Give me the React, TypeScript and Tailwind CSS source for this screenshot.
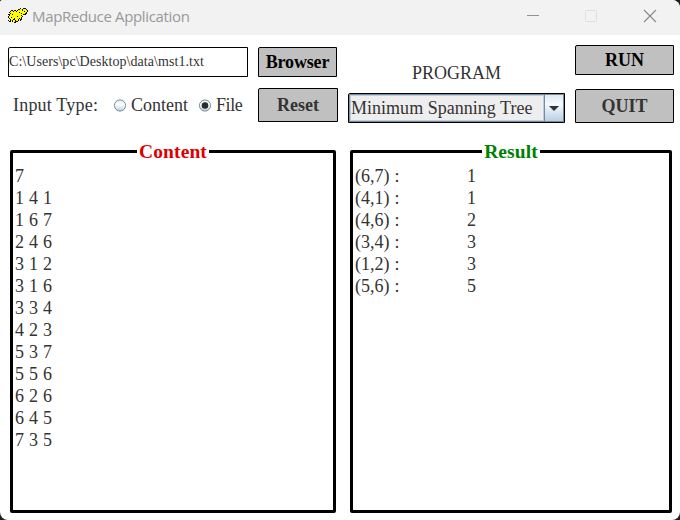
import React from "react";

const contentRows = ["7", "1 4 1", "1 6 7", "2 4 6", "3 1 2", "3 1 6", "3 3 4", "4 2 3", "5 3 7", "5 5 6", "6 2 6", "6 4 5", "7 3 5"];
const resultRows = [["(6,7) :", "1"], ["(4,1) :", "1"], ["(4,6) :", "2"], ["(3,4) :", "3"], ["(1,2) :", "3"], ["(5,6) :", "5"]];

const mascotPixels = [
  "............k..kkk..",
  "..........kkyykyyyk.",
  "...kk.kk.kyyyykyyyyk",
  "..kyykyykyyyyyyykyyk",
  ".kyyyyyyyyykyyyyyyk.",
  "..kyyyyyyyyyykyyykk.",
  "kkyykyyyyyyyyyykkk..",
  ".kyyyyyyyyyyyk......",
  "k.yyyyyyykyyyyk.....",
  "kyykyyyyyyyyyk......",
  ".kyyyykyyyykyk......",
  "..kyykkyyykykk......",
  "k.kykyykyyk.k.......",
  ".kk.kyykkk..........",
  "......kk............",
];

function Mascot() {
  return (
    <svg width="20" height="15" viewBox="0 0 20 15" shapeRendering="crispEdges">
      {mascotPixels.flatMap((row, y) =>
        row.split("").map((c, x) =>
          c === "." ? null : <rect key={`${x}-${y}`} x={x} y={y} width="1" height="1" fill={c === "k" ? "#111100" : "#ffff00"} />
        )
      )}
    </svg>
  );
}

function TitleBar() {
  return (
    <header className="flex h-[35px] items-start bg-[#f2f2f2] pl-2 text-[#999999]">
      <div className="mt-2"><Mascot /></div>
      <span className="ml-1 mt-[5px] font-['Open_Sans',sans-serif] text-[15px] leading-[22px] tracking-[-0.35px] whitespace-nowrap">MapReduce Application</span>
      <svg className="ml-auto mr-[23px] mt-[9px]" width="131" height="14" viewBox="0 0 131 14" fill="none">
        <path d="M1 6.5h12" stroke="#929292" />
        <rect x="59.5" y="1.5" width="11" height="11" rx="1" stroke="#e0e0e0" />
        <path d="M118 1l12 12M130 1l-12 12" stroke="#888888" strokeWidth="1.1" />
      </svg>
    </header>
  );
}

function PushButton({ label, className }: { label: string; className: string }) {
  return (
    <button className={`flex items-center justify-center rounded-tl-[2px] border border-black bg-[#c0c0c0] text-[18px] leading-[20px] font-bold ${className}`}>
      {label}
    </button>
  );
}

function Radio({ selected = false }: { selected?: boolean }) {
  return (
    <svg width="13" height="13" viewBox="0 0 13 13">
      <defs>
        <linearGradient id="radioFill" x1="0" y1="0" x2="0" y2="1">
          <stop offset="0" stopColor="#dde8f3" />
          <stop offset="0.4" stopColor="#ffffff" />
          <stop offset="1" stopColor="#b8cfe5" />
        </linearGradient>
      </defs>
      <circle cx="7" cy="6.5" r="5.6" fill="url(#radioFill)" stroke="#7a8a99" />
      {selected && <circle cx="7" cy="6.5" r="3.3" fill="#2b2b2b" />}
    </svg>
  );
}

function Controls() {
  return (
    <section className="flex h-[115px] items-start pl-2">
      <div className="w-[240px]">
        <div className="mt-3 flex h-[30px] items-center rounded-tl-[2px] border border-black">
          <span className="text-[14px] leading-4 tracking-[0.05px] whitespace-nowrap">C:\Users\pc\Desktop\data\mst1.txt</span>
        </div>
        <div className="mt-[17px] flex h-[22px] items-center pl-[5px] text-[18px] leading-[22px] whitespace-nowrap">
          <span className="w-[100px] tracking-[0.2px]">Input Type:</span>
          <Radio />
          <span className="ml-[5px] w-[67px]">Content</span>
          <Radio selected />
          <span className="ml-[5px] tracking-[-0.4px]">File</span>
        </div>
      </div>
      <div className="ml-[10px] mt-3 w-20">
        <PushButton label="Browser" className="h-[30px] w-[79px] tracking-[-0.15px] text-black" />
        <PushButton label="Reset" className="mt-[11px] h-[34px] w-20 text-[#333333]" />
      </div>
      <div className="ml-[10px] w-[217px]">
        <div className="mt-[27px] h-[22px] text-center text-[18px] leading-[22px]">PROGRAM</div>
        <div className="mt-[9px] flex h-[30px] rounded-tl-[2px] border border-black bg-[#eeeeee]">
          <div className="flex flex-1 items-center border border-[#7a8a99] shadow-[inset_0_0_0_1px_#b8cfe5] pl-[1px] text-[18px] leading-[22px] tracking-[0.02px] whitespace-nowrap">
            Minimum Spanning Tree
          </div>
          <div className="flex w-[19px] items-center justify-center border border-l-0 border-[#7a8a99] bg-linear-to-b from-[#dfe9f3] via-[#f7faff] via-35% to-[#b8cfe5]">
            <svg className="shrink-0" width="10" height="5" viewBox="0 0 10 5"><path d="M0 0h10L5 5z" fill="#333333" /></svg>
          </div>
        </div>
      </div>
      <div className="ml-[10px] mt-[10px] w-[99px]">
        <PushButton label="RUN" className="h-[30px] w-full text-black" />
        <PushButton label="QUIT" className="mt-[14px] h-[34px] w-full text-[#333333]" />
      </div>
    </section>
  );
}

function Panel({ title, titleClass, width, children }: { title: string; titleClass: string; width: string; children: React.ReactNode }) {
  return (
    <fieldset className={`h-[374px] rounded-[2px] border-[3px] border-black ${width}`}>
      <legend className={`mx-auto text-center text-[19.5px] leading-[25px] tracking-[0.1px] font-bold ${titleClass}`}>{title}</legend>
      <div className="pl-[2px] pt-[1px] text-[18px] leading-[22px] [word-spacing:0.5px]">{children}</div>
    </fieldset>
  );
}

export default function App() {
  return (
    <div className="h-[520px] w-[680px] overflow-hidden bg-[#1f1f1f]">
      <main className="h-full overflow-hidden rounded-[8px] rounded-tl-[3px] bg-white font-['Liberation_Serif',serif] text-[#333333]">
        <TitleBar />
        <Controls />
        <div className="-mt-[11px] flex gap-[14px] pl-[10px]">
          <Panel title="Content" titleClass="w-[72px] text-[#dd0000]" width="w-[326px]">
            {contentRows.map((row) => <div key={row}>{row}</div>)}
          </Panel>
          <Panel title="Result" titleClass="w-[58px] text-[#008000]" width="w-[322px]">
            {resultRows.map(([edge, weight]) => (
              <div className="flex" key={edge}><span className="w-[112px]">{edge}</span><span>{weight}</span></div>
            ))}
          </Panel>
        </div>
      </main>
    </div>
  );
}
